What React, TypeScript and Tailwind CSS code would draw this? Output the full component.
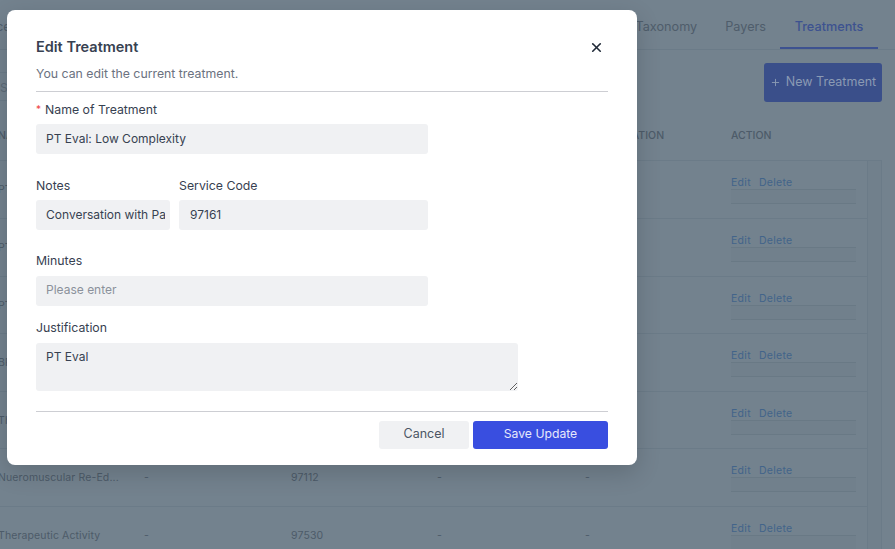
import { Plus, X } from "lucide-react";

type Row = { name: string; code: string; h: string };

const ROWS: Row[] = [
  { name: "PT Eval: Low Complexity", code: "97161", h: "h-[58px]" },
  { name: "PT Eval: Moderate", code: "97162", h: "h-[58px]" },
  { name: "PT Eval: High", code: "97163", h: "h-[57px]" },
  { name: "BP Check", code: "97750", h: "h-[58px]" },
  { name: "Therapeutic Exercise", code: "97110", h: "h-[57px]" },
  { name: "Nueromuscular Re-Ed...", code: "97112", h: "h-[58px]" },
  { name: "Therapeutic Activity", code: "97530", h: "h-[58px]" },
];

const inputCls =
  "h-[30px] w-full rounded-[3px] bg-[#f0f1f3] px-[10px] pb-[2px] text-[12px] text-[#374151] outline-none placeholder:text-[#8b919b]";

function TreatmentRow({ name, code, h }: Row) {
  return (
    <div className={`flex ${h} border-b border-[#6b7b88]`}>
      <div className="grid w-[869px] grid-cols-[146px_147px_146px_148px_146px_136px] pt-[15px] text-[10.5px] leading-[14px] tracking-[0.12px] text-[#4d5b69]">
        <span className="truncate pt-[7px]">{name}</span>
        <span className="pt-[7px]">-</span>
        <span className="pt-[7px]">{code}</span>
        <span className="pt-[7px]">-</span>
        <span className="pt-[7px]">-</span>
        <div>
          <div className="flex gap-[8px] tracking-[0.3px] text-[#42648a]">
            <span>Edit</span>
            <span>Delete</span>
          </div>
          <div className="-mt-[1px] h-[15px] w-[125px] border-y border-[#697985] bg-[#71808c]" />
        </div>
      </div>
    </div>
  );
}

function Background() {
  return (
    <div className="h-[549px] w-[895px] overflow-hidden bg-[#73828e] font-['Inter',sans-serif]">
      {/* tabs */}
      <div className="flex h-[50px] items-start justify-between border-b border-[#6b7b88] pr-[17px] text-[12.7px] text-[#4f5d6b]">
        <span className="-ml-[4px] pt-[17px]">ce</span>
        <div className="flex">
          <span className="px-[14px] pt-[17px]">Taxonomy</span>
          <span className="px-[14px] pt-[17px]">Payers</span>
          <span className="flex h-[49px] w-[98px] justify-center border-b-[2px] border-[#3d5290] pt-[17px] font-medium text-[#3d5290]">
            Treatments
          </span>
        </div>
      </div>
      {/* toolbar */}
      <div className="flex h-[69px] items-start justify-between pr-[13px] pt-[13px]">
        <div className="mt-[9px] h-[29px] w-[20px] border-y border-[#6b7b88] pt-[6px] text-[12px] text-[#5d6b78]">Se</div>
        <button className="flex h-[39px] w-[118px] items-center justify-center gap-[5px] rounded-[3px] bg-[#3a4f8a] text-[12.5px] text-[#8a9ab3]">
          <Plus className="h-[11px] w-[11px]" />
          New Treatment
        </button>
      </div>
      {/* table */}
      <div className="-ml-[2px] flex w-[886px]">
        <div className="w-[869px]">
          <div className="grid h-[42px] grid-cols-[146px_147px_146px_148px_146px_136px] items-center border-b border-[#6b7b88] pb-[7px] text-[10.5px] font-medium text-[#4d5b69]">
            <span>NAME</span>
            <span>NOTES</span>
            <span>CODE</span>
            <span>MINUTES</span>
            <span>JUSTIFICATION</span>
            <span>ACTION</span>
          </div>
          {ROWS.map((r) => (
            <TreatmentRow key={r.code} {...r} />
          ))}
        </div>
        <div className="mt-[41px] h-[408px] w-[15px] border-x border-t border-[#6b7b88] bg-[#71808c]" />
      </div>
    </div>
  );
}

function Label({ children }: { children: React.ReactNode }) {
  return <label className="block h-[18px] pt-[1px] text-[12.3px] leading-[18px] text-[#374151]">{children}</label>;
}

export default function App() {
  return (
    <div className="relative h-[549px] w-[895px] overflow-hidden">
      <Background />
      <div className="absolute left-[7px] top-[10px] h-[455px] w-[630px] rounded-[8px] bg-white px-[29px] font-['Inter',sans-serif] shadow-[0_8px_24px_rgba(0,0,0,0.16)]">
        <div className="flex items-center justify-between pr-[4px] pt-[28px]">
          <h2 className="text-[14.5px] font-semibold leading-[18px] text-[#374151]">Edit Treatment</h2>
          <X className="h-[15px] w-[15px] text-[#1f2937]" strokeWidth={2.6} />
        </div>
        <p className="mt-[9px] border-b border-[#cdced3] pb-[8px] text-[12.3px] leading-[18px] text-[#6b7280]">
          You can edit the current treatment.
        </p>
        <div className="mt-[8px] flex items-center gap-[4px]">
          <span className="text-[10px] leading-[18px] text-[#ef4444]">*</span>
          <Label>Name of Treatment</Label>
        </div>
        <div className="mt-[6px] w-[392px]">
          <input className={inputCls} defaultValue="PT Eval: Low Complexity" />
        </div>
        <div className="mt-[22px] flex w-[392px] gap-[9px]">
          <div className="w-[134px]">
            <Label>Notes</Label>
            <input className={`${inputCls} mt-[6px] !pr-[5px]`} defaultValue="Conversation with Patient" />
          </div>
          <div className="flex-1">
            <Label>Service Code</Label>
            <input className={`${inputCls} mt-[6px] !pl-[11px]`} defaultValue="97161" />
          </div>
        </div>
        <div className="mt-[21px] w-[392px]">
          <Label>Minutes</Label>
          <input className={`${inputCls} mt-[7px] !pb-[3px]`} placeholder="Please enter" />
        </div>
        <div className="mt-[12px]">
          <Label>Justification</Label>
          <textarea
            className="mt-[7px] block h-[48px] w-[482px] rounded-[3px] bg-[#f0f1f3] px-[10px] pt-[5px] text-[12px] leading-[18px] text-[#374151] outline-none"
            defaultValue="PT Eval"
          />
        </div>
        <div className="mt-[20px] flex justify-end gap-[4px] border-t border-[#cdced3] pt-[9px]">
          <button className="h-[28px] w-[90px] rounded-[3px] bg-[#f0f1f3] pb-[2px] text-[12.5px] text-[#4b5563]">Cancel</button>
          <button className="h-[28px] w-[135px] rounded-[3px] bg-[#394ee0] pb-[2px] text-[12.2px] text-[#e6e9fb]">Save Update</button>
        </div>
      </div>
    </div>
  );
}
